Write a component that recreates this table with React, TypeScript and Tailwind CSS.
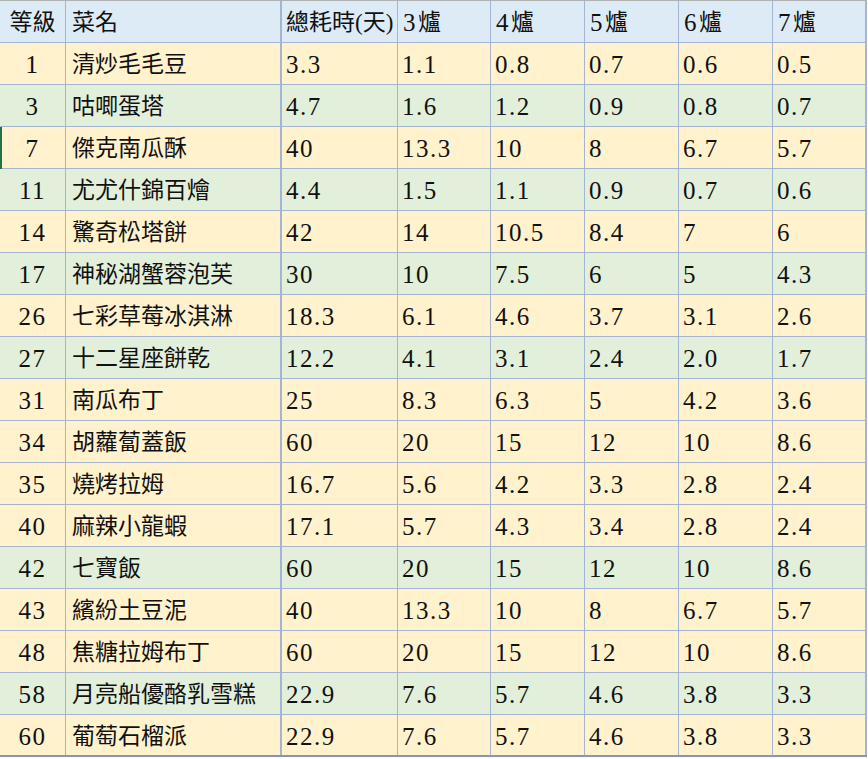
import React from 'react';

type Row = { lv: string; name: string; vals: string[]; green?: boolean };

const rows: Row[] = [
  { lv: '1', name: '清炒毛毛豆', vals: ['3.3', '1.1', '0.8', '0.7', '0.6', '0.5'] },
  { lv: '3', name: '咕唧蛋塔', vals: ['4.7', '1.6', '1.2', '0.9', '0.8', '0.7'], green: true },
  { lv: '7', name: '傑克南瓜酥', vals: ['40', '13.3', '10', '8', '6.7', '5.7'] },
  { lv: '11', name: '尤尤什錦百燴', vals: ['4.4', '1.5', '1.1', '0.9', '0.7', '0.6'], green: true },
  { lv: '14', name: '驚奇松塔餅', vals: ['42', '14', '10.5', '8.4', '7', '6'] },
  { lv: '17', name: '神秘湖蟹蓉泡芙', vals: ['30', '10', '7.5', '6', '5', '4.3'], green: true },
  { lv: '26', name: '七彩草莓冰淇淋', vals: ['18.3', '6.1', '4.6', '3.7', '3.1', '2.6'] },
  { lv: '27', name: '十二星座餅乾', vals: ['12.2', '4.1', '3.1', '2.4', '2.0', '1.7'], green: true },
  { lv: '31', name: '南瓜布丁', vals: ['25', '8.3', '6.3', '5', '4.2', '3.6'] },
  { lv: '34', name: '胡蘿蔔蓋飯', vals: ['60', '20', '15', '12', '10', '8.6'] },
  { lv: '35', name: '燒烤拉姆', vals: ['16.7', '5.6', '4.2', '3.3', '2.8', '2.4'] },
  { lv: '40', name: '麻辣小龍蝦', vals: ['17.1', '5.7', '4.3', '3.4', '2.8', '2.4'] },
  { lv: '42', name: '七寶飯', vals: ['60', '20', '15', '12', '10', '8.6'], green: true },
  { lv: '43', name: '繽紛土豆泥', vals: ['40', '13.3', '10', '8', '6.7', '5.7'] },
  { lv: '48', name: '焦糖拉姆布丁', vals: ['60', '20', '15', '12', '10', '8.6'] },
  { lv: '58', name: '月亮船優酪乳雪糕', vals: ['22.9', '7.6', '5.7', '4.6', '3.8', '3.3'], green: true },
  { lv: '60', name: '葡萄石榴派', vals: ['22.9', '7.6', '5.7', '4.6', '3.8', '3.3'] },
];

const grid = 'grid grid-cols-[66px_216px_116px_93px_94px_94px_94px_94px] h-[42px]';
const cell = 'flex items-center border-r border-[#a3b5d3] pt-[2px] whitespace-nowrap overflow-hidden';
const thick = 'border-r-2 border-[#8596b3]';
const num = 'text-[25px] tracking-[1.5px]';

export default function App() {
  return (
    <div
      className="w-[868px] h-[759px] bg-white text-[23px] text-[#111] leading-none"
      style={{ fontFamily: '"Liberation Serif", "Noto Sans CJK TC", serif' }}
    >
      <div className="w-[867px] border-t border-[#b0b0b0]">
        <div className={`${grid} bg-[#ddebf7] border-b border-[#a3b5d3]`}>
          <div className={`${cell} justify-center`}>等級</div>
          <div className={`${cell} ${thick} pl-[6px]`}>菜名</div>
          <div className={`${cell} pl-[4px]`}>總耗時(天)</div>
          {['3', '4', '5', '6', '7'].map((h, i) => (
            <div key={h} className={`${cell} ${i === 4 ? thick : ''} pl-[5px]`}>
              <span className={`${num} mr-[1px]`}>{h}</span>爐
            </div>
          ))}
        </div>
        {rows.map((r, idx) => (
          <div
            key={r.lv}
            className={`${grid} relative ${r.green ? 'bg-[#e2efda]' : 'bg-[#fff2cc]'} ${
              idx === rows.length - 1 ? 'border-b-2 border-[#8596b3]' : 'border-b border-[#a3b5d3]'
            }`}
          >
            {idx === 2 && <span className="absolute left-0 top-0 h-[42px] w-[2px] bg-[#217346]" />}
            <div className={`${cell} ${num} justify-center`}>{r.lv}</div>
            <div className={`${cell} ${thick} pl-[6px]`}>{r.name}</div>
            {r.vals.map((v, i) => (
              <div key={i} className={`${cell} ${num} ${i === 5 ? thick : ''} pl-[4px]`}>
                {v}
              </div>
            ))}
          </div>
        ))}
      </div>
    </div>
  );
}
